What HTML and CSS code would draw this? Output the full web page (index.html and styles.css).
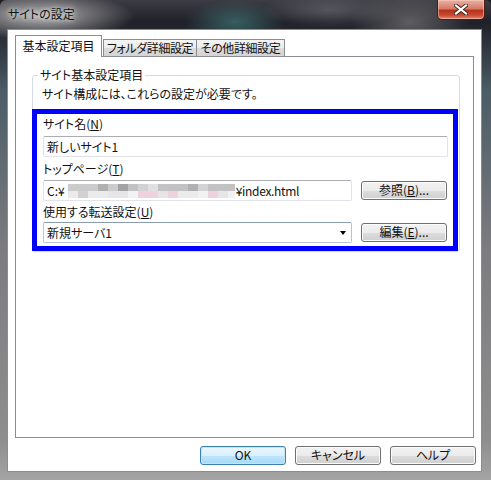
FILE: index.html
```html
<!DOCTYPE html>
<html>
  <head>
  <meta charset="utf-8">
  <link rel="stylesheet" href="styles.css">
  </head>
  <body>
    <div class="window">
      <div class="titlebar">
        <span class="title">サイトの設定</span>
        <div class="closeButton">
          <svg width="14" height="11" viewBox="0 0 14 11">
            <path d="M2 1.5 L12 9.5 M12 1.5 L2 9.5" stroke="#3a2420" stroke-width="4" stroke-linecap="square"/>
            <path d="M2 1.5 L12 9.5 M12 1.5 L2 9.5" stroke="#fff" stroke-width="2.2" stroke-linecap="square"/>
          </svg>
        </div>
      </div>
      <div class="client">
        <div class="tabs">
          <div class="tab selected">基本設定項目</div>
          <div class="tab second">フォルダ詳細設定</div>
          <div class="tab third">その他詳細設定</div>
        </div>
        <div class="tabPanel">
          <fieldset class="group">
            <legend>サイト基本設定項目</legend>
            <p class="note">サイト構成には、これらの設定が必要です。</p>
            <div class="highlight">
              <div class="label">サイト名(<u>N</u>)</div>
              <div class="textbox full">新しいサイト1</div>

              <div class="label">トップページ(<u>T</u>)</div>
              <div class="row">
                <div class="textbox path">
                  <span>C:¥</span>
                  <!-- hidden folder name -->
                  <div class="mosaic">
                    <div class="mosaicRow">
                      <i class="g2"></i><i class="g2"></i><i class="g2"></i><i class="g4"></i><i class="g2"></i><i class="g5"></i><i class="g3"></i><i class="g1"></i><i class="g0"></i><i class="g3"></i><i class="g3"></i><i class="g3"></i><i class="g4"></i><i class="g1"></i><i class="g3"></i><i class="g3"></i><i class="g3 short"></i>
                    </div>
                    <div class="mosaicRow light">
                      <i class="l1"></i><i class="g1"></i><i class="l1"></i><i class="l1"></i><i class="l2"></i><i class="l2"></i><i class="l0"></i><i class="pk"></i><i class="pk"></i><i class="l2"></i><i class="pk"></i><i class="l1"></i><i class="l1"></i><i class="l0"></i><i class="pk"></i><i class="l2"></i><i class="l0 short"></i>
                    </div>
                  </div>
                  <span>¥index.html</span>
                </div>
                <div class="button">参照(<u>B</u>)...</div>
              </div>

              <div class="label">使用する転送設定(<u>U</u>)</div>
              <div class="row">
                <div class="select">
                  <span>新規サーバ1</span>
                  <span class="arrow"></span>
                </div>
                <div class="button">編集(<u>E</u>)...</div>
              </div>
            </div>
          </fieldset>
        </div>
        <div class="dialogButtons">
          <div class="button default">OK</div>
          <div class="button">キャンセル</div>
          <div class="button">ヘルプ</div>
        </div>
      </div>
    </div>
  </body>
</html>
```

FILE: styles.css
```css
body {
  margin: 0;
  background-color: #1e1e24;
  font-family: "Noto Sans CJK JP", sans-serif;
  font-size: 12px;
  font-feature-settings: "palt";
  color: #111;
}

/* glass frame */
.window {
  width: 491px;
  height: 480px;
  display: flex;
  flex-direction: column;
  border-radius: 6px 6px 0 0;
  background:
    radial-gradient(ellipse 95px 24px at 40px 16px, rgba(190,190,190,0.95), rgba(190,190,190,0)),
    radial-gradient(ellipse 50px 22px at 235px 22px, rgba(60,110,110,0.8), rgba(60,110,110,0)),
    radial-gradient(ellipse 70px 18px at 330px 10px, rgba(110,110,120,0.6), rgba(110,110,120,0)),
    radial-gradient(ellipse 60px 30px at 410px 22px, rgba(120,120,120,0.7), rgba(120,120,120,0)),
    linear-gradient(to bottom, #3c3c44 0, #202028 22px, #4a5c66 90px, #7c7c80 250px, #8e8e8e 440px, #a4a4a4 480px);
}

.titlebar {
  height: 29px;
  display: flex;
  justify-content: space-between;
  align-items: flex-start;
}

.title {
  margin: 6px 0 0 8px;
  line-height: 15px;
  text-shadow: 0 0 4px #e8e8e8, 0 0 8px #d0d0d0;
}

.closeButton {
  width: 48px;
  height: 20px;
  margin-right: 6px;
  box-sizing: border-box;
  border: 1px solid #4a1c16;
  border-top: none;
  border-radius: 0 0 5px 5px;
  background: linear-gradient(to bottom, #e9b3a4 0, #d67b66 45%, #b8321c 55%, #c74a32 80%, #e08a70 100%);
  box-shadow: inset 0 0 0 1px rgba(255,210,200,0.5);
  display: flex;
  justify-content: center;
  align-items: center;
}

.client {
  flex: 1;
  margin: 0 9px 8px 7px;
  padding: 5px 5px 0 7px;
  background-color: #fff;
  border: 1px solid #8c8c98;
  display: flex;
  flex-direction: column;
}

.tabs {
  display: flex;
  align-items: flex-end;
  height: 21px;
  position: relative;
  z-index: 1;
}

.tab {
  box-sizing: border-box;
  height: 17px;
  border: 1px solid #898c95;
  border-bottom: none;
  background: linear-gradient(to bottom, #f4f4f4 0, #ebebeb 50%, #dcdcdc 51%, #d4d4d4 100%);
  line-height: 15px;
  text-align: center;
  letter-spacing: -0.4px;
}

.tab.selected {
  height: 22px;
  width: 87px;
  margin-bottom: -1px;
  background: #fff;
  line-height: 19px;
  letter-spacing: 0;
}

.tab.second {
  width: 94px;
  margin-left: 1px;
}

.tab.third {
  width: 88px;
  border-left: none;
}

.tabPanel {
  box-sizing: border-box;
  height: 382px;
  margin-right: 2px;
  border: 1px solid #898c95;
  padding: 11px 0 0 16px;
}

.group {
  box-sizing: border-box;
  width: 428px;
  margin: 0;
  padding: 0;
  border: 1px solid #d5dae2;
  border-radius: 3px;
}

.group legend {
  margin-left: 5px;
  padding: 0 2px;
  line-height: 14px;
}

.note {
  margin: 4px 0 7px 9px;
  line-height: 16px;
}

/* blue marker around the required fields */
.highlight {
  box-sizing: border-box;
  width: 426px;
  margin-left: -1px;
  border: 5px solid #0000ff;
  padding: 2px 4px 3px 6px;
}

.label {
  line-height: 16px;
  margin-bottom: 4px;
}

.textbox + .label {
  margin-top: 4px;
}

.row + .label {
  margin-top: 3px;
}

.row {
  display: flex;
  align-items: center;
  justify-content: space-between;
  height: 21px;
}

.label + .row {
  margin-top: -1px;
}

.row:last-child {
  margin-top: -2px;
}

.textbox, .select {
  box-sizing: border-box;
  height: 21px;
  border: 1px solid #e2e3ea;
  border-top-color: #abadb3;
  border-radius: 2px;
  padding-left: 3px;
  line-height: 19px;
  display: flex;
  align-items: center;
}

.textbox.full {
  width: 405px;
}

.path, .select {
  width: 309px;
}

.path span:last-child {
  margin-left: 1px;
  letter-spacing: -0.3px;
}

.mosaic {
  display: flex;
  flex-direction: column;
  margin-left: 3px;
  height: 14px;
}

.mosaicRow {
  display: flex;
  height: 7px;
}

.mosaicRow i {
  width: 10px;
}

.mosaicRow i.short {
  width: 7px;
}

.g0 { background: #e0e0e0; }
.g1 { background: #d2d2d2; }
.g2 { background: #cbcbcb; }
.g3 { background: #c2c2c2; }
.g4 { background: #b0b0b0; }
.g5 { background: #a2a2a2; }
.l0 { background: #f2f2f2; }
.l1 { background: #ebebeb; }
.l2 { background: #e6e6e6; }
.pk { background: #eed2de; }

.select {
  border-color: #b8c4d4;
  border-top-color: #8a9cb4;
  justify-content: space-between;
}

.arrow {
  width: 0;
  height: 0;
  margin-right: 5px;
  border-left: 3.5px solid transparent;
  border-right: 3.5px solid transparent;
  border-top: 4px solid #000;
}

.button {
  box-sizing: border-box;
  width: 86px;
  height: 19px;
  border: 1px solid #707070;
  border-radius: 3px;
  background: linear-gradient(to bottom, #f2f2f2 0, #ebebeb 50%, #dddddd 51%, #cfcfcf 100%);
  box-shadow: inset 0 0 0 1px #fcfcfc;
  text-align: center;
  line-height: 16px;
}

.row .button {
  margin-right: 2px;
}

.dialogButtons {
  display: flex;
  justify-content: flex-end;
  gap: 9px;
  margin-top: 8px;
}

.button.default {
  border-color: #3c7fb1;
  background: linear-gradient(to bottom, #eaf6fd 0, #d9f0fc 50%, #bee6fd 51%, #a7d9f5 100%);
  box-shadow: inset 0 0 0 1px #c4e5f6;
}
```
